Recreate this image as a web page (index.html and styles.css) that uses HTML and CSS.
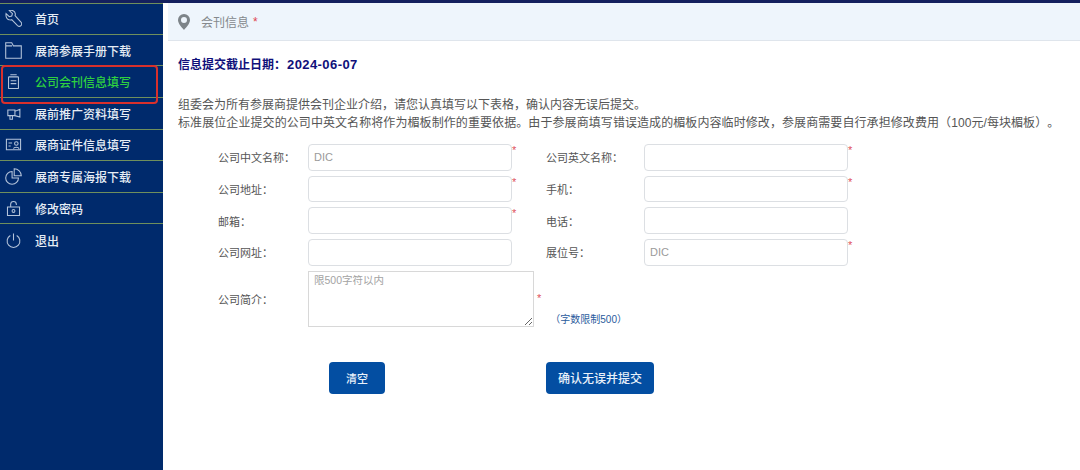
FILE: index.html
```html
<!DOCTYPE html>
<html lang="zh-CN">
<head>
<meta charset="utf-8">
<title>会刊信息</title>
<link rel="stylesheet" href="styles.css">
</head>
<body>
<div class="topbar"></div>
<div class="layout">
  <nav class="sidebar">
    <a class="item"><svg class="ico" viewBox="0 0 24 24"><path d="M1.500 5 6 9.500l3.500-1 1-3.500L6 .8C9.500-.5 14 1 14.500 5c.2 1.200 0 2.200-.3 3L22.500 17c1.600 2 1.200 3.800 0 5-1.400 1.400-3.200 1.500-4.800 0l-8.200-8.300c-1.200.4-2.700.5-4-.1C2.500 12.500 1 9 1.500 5Z"/></svg><span>首页</span></a>
    <a class="item"><svg class="ico" viewBox="0 0 24 24"><path d="M1 23V1h8.500L12 5.500h11V23Z M1 5.500h9"/></svg><span>展商参展手册下载</span></a>
    <a class="item active"><svg class="ico" viewBox="0 0 24 24"><path d="M7.500 2.500h9M6 5.500h12a1 1 0 0 1 1 1V21a1 1 0 0 1-1 1H6a1 1 0 0 1-1-1V6.500a1 1 0 0 1 1-1Z M8 11h8M8 15h8"/></svg><span>公司会刊信息填写</span></a>
    <a class="item"><svg class="ico" viewBox="0 0 24 24"><path d="M4 7h10v8H4Z M14 9l7-3v11l-7-2 M7 15v5h3.500v-5"/></svg><span>展前推广资料填写</span></a>
    <a class="item"><svg class="ico" viewBox="0 0 24 24"><path d="M2 4.500h20v15H2Z M5 10h5M5 14h3"/><circle cx="16" cy="10.500" r="2.500"/><path d="M12 18c.5-3 7-3 8 0"/></svg><span>展商证件信息填写</span></a>
    <a class="item"><svg class="ico" viewBox="0 0 24 24"><path d="M10 5a9 9 0 1 0 9 9H10Z M13 1a10 10 0 0 1 10 10H13Z"/></svg><span>展商专属海报下载</span></a>
    <a class="item"><svg class="ico" viewBox="0 0 24 24"><path d="M3.500 10h17v12h-17Z M8 10V6a4 4 0 0 1 8 0v1"/><circle cx="12" cy="15.500" r="2"/></svg><span>修改密码</span></a>
    <a class="item"><svg class="ico" viewBox="0 0 24 24"><path d="M12 2v10M7.500 5a9 9 0 1 0 9 0"/></svg><span>退出</span></a>
  </nav>
  <main class="main">
    <header class="crumb">
      <svg class="pin" viewBox="0 0 12 16"><path fill-rule="evenodd" d="M6 0a6 6 0 0 1 6 6c0 3.500-3.500 7-6 10C3.500 13 0 9.500 0 6a6 6 0 0 1 6-6Zm0 3a3 3 0 1 0 0 6 3 3 0 0 0 0-6Z"/></svg>
      <span class="crumb-text">会刊信息</span><span class="crumb-star">*</span>
    </header>
    <section class="content">
      <h1 class="deadline">信息提交截止日期：<span class="date">2024-06-07</span></h1>
      <p class="intro">组委会为所有参展商提供会刊企业介绍，请您认真填写以下表格，确认内容无误后提交。<br><span class="intro-wide">标准展位企业提交的公司中英文名称将作为楣板制作的重要依据。由于参展商填写错误造成的楣板内容临时修改，参展商需要自行承担修改费用（100元/每块楣板）。</span></p>
      <form class="form">
        <div class="grid">
          <label class="lbl">公司中文名称：</label><input class="inp" placeholder="DIC"><i class="star">*</i>
          <label class="lbl">公司英文名称：</label><input class="inp"><i class="star">*</i>
          <label class="lbl">公司地址：</label><input class="inp"><i class="star">*</i>
          <label class="lbl">手机：</label><input class="inp"><i class="star">*</i>
          <label class="lbl">邮箱：</label><input class="inp"><i class="star">*</i>
          <label class="lbl">电话：</label><input class="inp"><i class="star"></i>
          <label class="lbl">公司网址：</label><input class="inp"><i class="star"></i>
          <label class="lbl">展位号：</label><input class="inp" placeholder="DIC"><i class="star">*</i>
        </div>
        <div class="intro-row">
          <label class="lbl">公司简介：</label>
          <textarea class="area" placeholder="限500字符以内"></textarea>
          <i class="star star-mid">*</i>
          <span class="limit">（字数限制500）</span>
        </div>
        <div class="actions">
          <button type="button" class="btn btn-clear">清空</button>
          <button type="button" class="btn btn-submit">确认无误并提交</button>
        </div>
      </form>
    </section>
  </main>
</div>
<div class="mark"></div>
</body>
</html>
```
FILE: styles.css
```css
* { box-sizing: border-box; }
html, body { margin: 0; height: 100%; overflow: hidden; background: #fff; }
body {
  width: 1080px;
  height: 470px;
  position: relative;
  font-family: "Liberation Sans", "Noto Sans CJK SC", sans-serif;
  font-size: 12px;
  color: #555;
  display: flex;
  flex-direction: column;
  text-spacing-trim: space-all;
}
.topbar { height: 3px; background: #14205e; flex: none; }
.layout { flex: 1; display: flex; min-height: 0; }

.sidebar { width: 163px; flex: none; background: #002a6c; border-top: 1px solid #6f8f5c; }
.item {
  height: 31.600px;
  display: flex;
  align-items: center;
  gap: 13px;
  padding-left: 5px;
  border-bottom: 1px solid #6f8f5c;
  color: #e6edf5;
  font-size: 12px;
  font-weight: 500;
}
.item:first-child { height: 30.800px; }
.item:last-child { border-bottom: 0; }
.item.active { color: #2fd13f; }
.ico {
  width: 17px;
  height: 17px;
  flex: none;
  fill: none;
  stroke: #b4c4da;
  stroke-width: 1.500;
}

.main { flex: 1; min-width: 0; padding-left: 5px; }
.crumb {
  height: 38px;
  display: flex;
  align-items: center;
  padding-left: 10px;
  background: #eef5fc;
  border-bottom: 1px solid #dfe5ec;
  color: #888;
}
.pin { width: 12px; height: 16px; fill: #7d8489; margin-right: 11px; }
.crumb-text { font-size: 12px; color: #85898d; }
.crumb-star { color: #e0454f; margin-left: 4px; font-size: 12px; }

.content { padding: 15px 0 0 10px; }
.deadline {
  margin: 0;
  font-size: 12px;
  line-height: 17px;
  font-weight: 700;
  color: #10107a;
}
.date { font-size: 13px; letter-spacing: 0.420px; margin-left: 1px; }
.intro {
  margin: 22px 0 0;
  font-size: 12px;
  line-height: 18px;
  color: #555;
  white-space: nowrap;
}
.intro-wide { letter-spacing: 0.080px; }
.form { padding: 12px 0 0 40px; }
.grid {
  display: grid;
  grid-template-columns: 90px 204px 34px 98px 204px 20px;
  grid-auto-rows: 26.700px;
  row-gap: 5px;
  align-items: center;
}
.lbl { font-size: 11px; color: #555; }
.inp {
  height: 100%;
  width: 100%;
  border: 1px solid #dcdfe3;
  border-radius: 4px;
  padding: 0 5px;
  background: #fff;
  font: 11px "Liberation Sans", "Noto Sans CJK SC", sans-serif;
  outline: none;
}
.inp::placeholder { color: #9a9a9a; opacity: 1; }
.star {
  align-self: start;
  font-style: normal;
  color: #e0505c;
  font-size: 11px;
  line-height: 13px;
}
.intro-row { display: flex; align-items: center; margin-top: 5px; height: 56px; }
.intro-row .lbl { width: 90px; flex: none; }
.area {
  width: 226px;
  height: 56px;
  flex: none;
  border: 1px solid #d8d8d8;
  border-radius: 0;
  padding: 2px 5px;
  font: 10.500px/12px "Liberation Sans", "Noto Sans CJK SC", sans-serif;
  outline: none;
  background: #fff;
}
.area::placeholder { color: #a3a3a3; opacity: 1; }
.star-mid { align-self: center; margin-left: 3px; }
.limit {
  align-self: flex-end;
  margin: 0 0 0 9px;
  font-size: 10px;
  line-height: 15px;
  color: #2a5b9c;
}
.actions { display: flex; margin-top: 35px; padding-left: 111px; }
.btn {
  height: 32px;
  border: 0;
  border-radius: 4px;
  background: #034ea2;
  color: #e9f1fa;
  font: 500 11px "Liberation Sans", "Noto Sans CJK SC", sans-serif;
  padding: 0;
}
.btn-clear { width: 56px; margin-right: 161px; }
.btn-submit { width: 108px; font-size: 12px; }

.mark {
  position: absolute;
  left: 1px;
  top: 65px;
  width: 157px;
  height: 39px;
  border: 2px solid #d8302c;
  border-radius: 4px;
}
```
